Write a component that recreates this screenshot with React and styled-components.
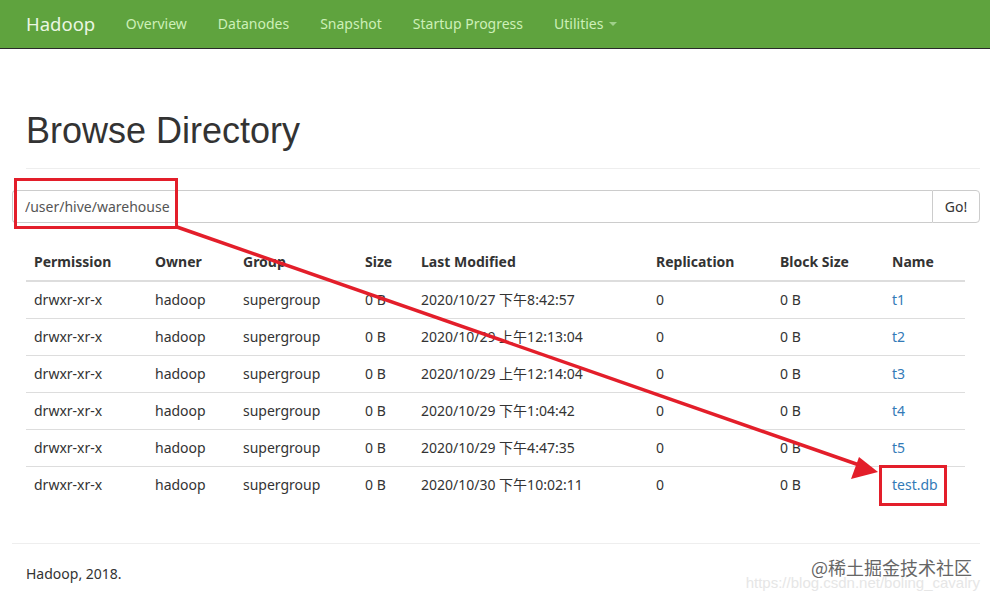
import styled, { createGlobalStyle } from 'styled-components';

const GlobalStyle = createGlobalStyle`
  html, body {
    margin: 0;
    padding: 0;
    background: #fff;
  }
  body {
    font-family: "Noto Sans", "Noto Sans CJK SC", sans-serif;
    font-size: 14px;
    line-height: 20px;
    color: #333;
  }
`;

const rows = [
  { modified: '2020/10/27 下午8:42:57', name: 't1' },
  { modified: '2020/10/29 上午12:13:04', name: 't2' },
  { modified: '2020/10/29 上午12:14:04', name: 't3' },
  { modified: '2020/10/29 下午1:04:42', name: 't4' },
  { modified: '2020/10/29 下午4:47:35', name: 't5' },
  { modified: '2020/10/30 下午10:02:11', name: 'test.db' },
];

const columns = [
  { label: 'Permission', width: 121 },
  { label: 'Owner', width: 88 },
  { label: 'Group', width: 122 },
  { label: 'Size', width: 56 },
  { label: 'Last Modified', width: 235 },
  { label: 'Replication', width: 124 },
  { label: 'Block Size', width: 112 },
  { label: 'Name', width: 81 },
];

const App = () => {
  return (
    <Page>
      <GlobalStyle />
      <Navbar>
        <Brand>Hadoop</Brand>
        <NavLink>Overview</NavLink>
        <NavLink>Datanodes</NavLink>
        <NavLink>Snapshot</NavLink>
        <NavLink>Startup Progress</NavLink>
        <NavLink>
          Utilities <Caret />
        </NavLink>
      </Navbar>

      <Container>
        <Header>
          <Title>Browse Directory</Title>
        </Header>

        <SearchGroup>
          <PathInput defaultValue="/user/hive/warehouse" />
          <GoButton>Go!</GoButton>
        </SearchGroup>

        <Table>
          <colgroup>
            {columns.map(col => (
              <col key={col.label} style={{ width: col.width }} />
            ))}
          </colgroup>
          <thead>
            <tr>
              {columns.map(col => (
                <Th key={col.label}>{col.label}</Th>
              ))}
            </tr>
          </thead>
          <tbody>
            {rows.map(row => (
              <tr key={row.name}>
                <Td>drwxr-xr-x</Td>
                <Td>hadoop</Td>
                <Td>supergroup</Td>
                <Td>0 B</Td>
                <Td>{row.modified}</Td>
                <Td>0</Td>
                <Td>0 B</Td>
                <Td>
                  <FileLink>{row.name}</FileLink>
                </Td>
              </tr>
            ))}
          </tbody>
        </Table>

        <Footer>
          <p>Hadoop, 2018.</p>
        </Footer>
      </Container>

      <Annotations width="990" height="601" viewBox="0 0 990 601">
        <rect x="15.5" y="179.5" width="161" height="48" fill="none" stroke="#e31e2a" strokeWidth="3" />
        <rect x="880.5" y="466.5" width="65" height="38" fill="none" stroke="#e31e2a" strokeWidth="3" />
        <line x1="177" y1="227" x2="862" y2="466" stroke="#e31e2a" strokeWidth="3.5" />
        <polygon points="878,472 851,479 859,457" fill="#e31e2a" />
      </Annotations>

      <Watermark>
        <WatermarkUrl>https://blog.csdn.net/boling_cavalry</WatermarkUrl>
        <WatermarkBrand>@稀土掘金技术社区</WatermarkBrand>
      </Watermark>
    </Page>
  );
};

export default App;

const Page = styled.div`
  position: relative;
  width: 990px;
  height: 601px;
  overflow: hidden;
`;

const Navbar = styled.nav`
  display: flex;
  align-items: center;
  height: 49px;
  padding: 0 11px;
  background-color: #5fa33e;
  border-bottom: 1px solid #2a2a2a;
  box-sizing: border-box;
`;

const Brand = styled.a`
  padding: 0 15px 0 15px;
  font-size: 18.5px;
  color: #eaf6e2;
`;

const NavLink = styled.a`
  display: flex;
  align-items: center;
  padding: 0 15.5px;
  font-size: 14px;
  color: #cdf0b8;
`;

const Caret = styled.span`
  display: inline-block;
  width: 0;
  height: 0;
  margin-left: 6px;
  border-top: 4px solid #9fd08a;
  border-left: 4px solid transparent;
  border-right: 4px solid transparent;
`;

const Container = styled.div`
  padding: 0 10px 0 12px;
`;

const Header = styled.div`
  margin: 62px 0 21px 14px;
  padding-bottom: 17px;
  border-bottom: 1px solid #eee;
`;

const Title = styled.h1`
  margin: 0;
  font-family: "Liberation Sans", Arial, sans-serif;
  font-size: 36px;
  font-weight: 400;
  line-height: 40px;
  color: #333;
`;

const SearchGroup = styled.div`
  display: flex;
  height: 33px;
`;

const PathInput = styled.input`
  flex: 1;
  padding: 6px 12px;
  font-family: inherit;
  font-size: 14px;
  color: #555;
  border: 1px solid #ccc;
  border-right: 0;
  border-radius: 4px 0 0 4px;
  outline: none;
`;

const GoButton = styled.button`
  width: 48px;
  font-family: inherit;
  font-size: 14px;
  color: #333;
  background: #fff;
  border: 1px solid #ccc;
  border-radius: 0 4px 4px 0;
`;

const Table = styled.table`
  width: 939px;
  margin: 21px 0 0 14px;
  border-collapse: collapse;
  table-layout: fixed;
`;

const Th = styled.th`
  padding: 8px;
  text-align: left;
  font-weight: 700;
  border-bottom: 2px solid #ddd;
  white-space: nowrap;
`;

const Td = styled.td`
  padding: 8px;
  border-top: 1px solid #ddd;
  white-space: nowrap;
  tr:first-child > & {
    border-top: 0;
  }
`;

const FileLink = styled.a`
  color: #337ab7;
`;

const Footer = styled.div`
  margin-top: 40px;
  border-top: 1px solid #eee;
  p {
    margin: 0;
    padding: 20px 14px;
  }
`;

const Annotations = styled.svg`
  position: absolute;
  top: 0;
  left: 0;
  pointer-events: none;
`;

const Watermark = styled.div`
  position: absolute;
  right: 10px;
  bottom: 8px;
  width: 260px;
  height: 34px;
`;

const WatermarkUrl = styled.span`
  position: absolute;
  right: 0;
  bottom: 0;
  font-family: "Liberation Sans", Arial, sans-serif;
  font-size: 15px;
  color: #e6e6e6;
  white-space: nowrap;
`;

const WatermarkBrand = styled.span`
  position: absolute;
  right: 8px;
  top: -2px;
  font-family: "Noto Sans CJK SC", sans-serif;
  font-size: 18px;
  color: #666;
  text-shadow: 0 0 2px #fff;
  white-space: nowrap;
`;
